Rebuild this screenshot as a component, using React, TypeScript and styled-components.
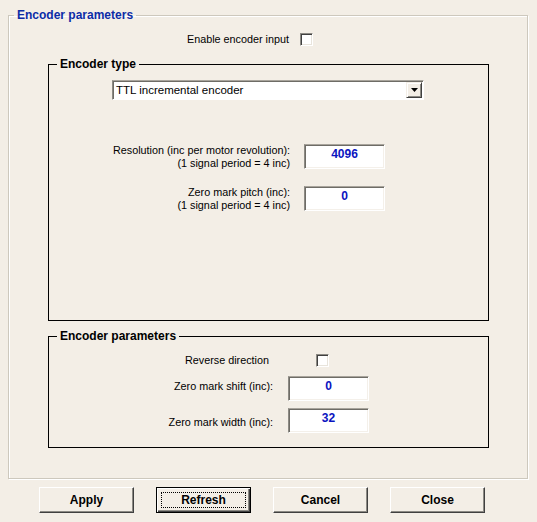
import React from "react";
import styled, { createGlobalStyle } from "styled-components";

const GlobalStyle = createGlobalStyle`
  html, body {
    margin: 0;
    padding: 0;
    background: #f3eee6;
  }
  body {
    font-family: "Liberation Sans", Arial, sans-serif;
    font-size: 10.8px;
    color: #000;
  }
`;

const Page = styled.div`
  width: 537px;
  height: 522px;
  padding: 8px 9px 0 8px;
  box-sizing: border-box;
`;

const GroupBox = styled.fieldset<{ $dark?: boolean }>`
  margin: 0;
  padding: 0;
  min-width: 0;
  border: 1px solid ${({ $dark }) => ($dark ? "#000" : "#cdc8bd")};
  box-shadow: ${({ $dark }) => ($dark ? "none" : "1px 1px 0 #fff, inset 1px 1px 0 #fff")};
`;

const InnerGroup = styled(GroupBox)`
  width: 441px;
  box-sizing: border-box;
`;

const Caption = styled.legend<{ $blue?: boolean; $offset: number }>`
  margin-left: ${({ $offset }) => $offset}px;
  padding: 0 3px;
  font-weight: bold;
  font-size: 12px;
  line-height: 14px;
  color: ${({ $blue }) => ($blue ? "#0c2ca6" : "#000")};
`;

const OuterBody = styled.div`
  display: flex;
  flex-direction: column;
  padding: 11px 0 30px 39px;
`;

const InnerBody = styled.div<{ $height: number; $top: number }>`
  height: ${({ $height }) => $height}px;
  box-sizing: border-box;
  padding-top: ${({ $top }) => $top}px;
  display: flex;
  flex-direction: column;
`;

const Row = styled.div<{ $gap: number; $mt?: number }>`
  display: flex;
  align-items: flex-start;
  gap: ${({ $gap }) => $gap}px;
  margin-top: ${({ $mt }) => $mt ?? 0}px;
`;

const Label = styled.div<{ $width: number; $pt?: number }>`
  width: ${({ $width }) => $width}px;
  flex: none;
  text-align: right;
  white-space: nowrap;
  line-height: 13px;
  padding-top: ${({ $pt }) => $pt ?? 0}px;
`;

const CheckBox = styled.div`
  width: 13px;
  height: 13px;
  box-sizing: border-box;
  background: #fff;
  border: 1px solid;
  border-color: #8c8a84 #fff #fff #8c8a84;
  box-shadow: inset 1px 1px 0 #404040, inset -1px -1px 0 #e8e4dc;
`;

const ValueBox = styled.div`
  width: 81px;
  height: 25px;
  box-sizing: border-box;
  background: #fff;
  border: 1px solid;
  border-color: #a8a49c #fff #fff #8c8a84;
  box-shadow: inset 1px 1px 0 #6e6c66, inset -1px -1px 0 #f4f0ea;
  color: #0a14c0;
  font-weight: bold;
  font-size: 12px;
  text-align: center;
  padding-top: 2px;
  line-height: 14px;
`;

const Select = styled.div`
  margin-left: 63px;
  width: 312px;
  height: 20px;
  box-sizing: border-box;
  background: #fff;
  border: 1px solid;
  border-color: #a8a49c #fff #fff #8c8a84;
  box-shadow: inset 1px 1px 0 #6e6c66;
  display: flex;
  align-items: center;
  justify-content: space-between;
  padding: 0 1px 0 3px;
  font-size: 11.5px;
`;

const ArrowButton = styled.div`
  width: 16px;
  height: 16px;
  box-sizing: border-box;
  background: #f3eee6;
  border: 1px solid;
  border-color: #f3eee6 #404040 #404040 #f3eee6;
  box-shadow: inset 1px 1px 0 #fff, inset -1px -1px 0 #8c8a84;
  display: flex;
  align-items: center;
  justify-content: center;
`;

const ButtonBar = styled.div`
  display: flex;
  gap: 22px;
  padding: 8px 0 0 31px;
`;

const Button = styled.button<{ $default?: boolean }>`
  width: 95px;
  height: 26px;
  box-sizing: border-box;
  margin: 0;
  padding: 0;
  background: #f3eee6;
  font-family: "Liberation Sans", Arial, sans-serif;
  font-weight: bold;
  font-size: 12px;
  color: #000;
  border: 1px solid;
  border-color: ${({ $default }) =>
    $default ? "#000" : "#fff #404040 #404040 #fff"};
  box-shadow: ${({ $default }) =>
    $default
      ? "inset 1px 1px 0 #fff, inset -1px -1px 0 #404040, inset -2px -2px 0 #8c8a84"
      : "inset -1px -1px 0 #8c8a84"};
  display: flex;
  align-items: center;
  justify-content: center;
`;

const FocusRing = styled.span`
  display: flex;
  align-items: center;
  justify-content: center;
  width: 85px;
  height: 16px;
  box-sizing: border-box;
  border: 1px dotted #000;
`;

const Triangle = () => (
  <svg width="7" height="4" viewBox="0 0 7 4">
    <path d="M0 0h7L3.5 4z" fill="#000" />
  </svg>
);

export default function App() {
  return (
    <Page>
      <GlobalStyle />
      <GroupBox>
        <Caption $blue $offset={5}>
          Encoder parameters
        </Caption>
        <OuterBody>
          <Row $gap={11}>
            <Label $width={241}>Enable encoder input</Label>
            <CheckBox />
          </Row>

          <Row $gap={0} $mt={11}>
            <InnerGroup $dark>
              <Caption $offset={8}>Encoder type</Caption>
              <InnerBody $height={249} $top={9}>
                <Select>
                  <span>TTL incremental encoder</span>
                  <ArrowButton>
                    <Triangle />
                  </ArrowButton>
                </Select>
                <Row $gap={14} $mt={44}>
                  <Label $width={241}>
                    Resolution (inc per motor revolution):
                    <br />
                    (1 signal period = 4 inc)
                  </Label>
                  <ValueBox>4096</ValueBox>
                </Row>
                <Row $gap={14} $mt={16}>
                  <Label $width={241}>
                    Zero mark pitch (inc):
                    <br />
                    (1 signal period = 4 inc)
                  </Label>
                  <ValueBox>0</ValueBox>
                </Row>
              </InnerBody>
            </InnerGroup>
          </Row>

          <Row $gap={0} $mt={8}>
            <InnerGroup $dark>
              <Caption $offset={8}>Encoder parameters</Caption>
              <InnerBody $height={104} $top={11}>
                <Row $gap={47}>
                  <Label $width={220}>Reverse direction</Label>
                  <CheckBox />
                </Row>
                <Row $gap={15} $mt={9}>
                  <Label $width={224} $pt={4}>
                    Zero mark shift (inc):
                  </Label>
                  <ValueBox>0</ValueBox>
                </Row>
                <Row $gap={15} $mt={7}>
                  <Label $width={224} $pt={8}>
                    Zero mark width (inc):
                  </Label>
                  <ValueBox>32</ValueBox>
                </Row>
              </InnerBody>
            </InnerGroup>
          </Row>
        </OuterBody>
      </GroupBox>
      <ButtonBar>
        <Button>Apply</Button>
        <Button $default>
          <FocusRing>Refresh</FocusRing>
        </Button>
        <Button>Cancel</Button>
        <Button>Close</Button>
      </ButtonBar>
    </Page>
  );
}
